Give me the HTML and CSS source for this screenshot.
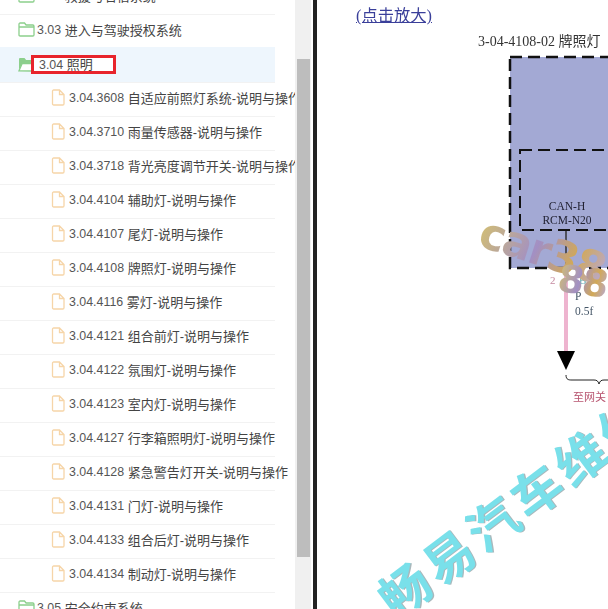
FILE: index.html
```html
<!DOCTYPE html>
<html lang="zh-CN">
  <head>
    <meta charset="UTF-8" />
    <meta name="viewport" content="width=device-width, initial-scale=1.0" />
    <title>3.04 照明</title>
    <link rel="stylesheet" href="styles.css">
  </head>

  <body>
    <svg class="icon-defs" width="0" height="0">
      <symbol id="folder" viewBox="0 0 17 15">
        <path d="M1 13V2.2C1 1.5 1.5 1 2.2 1h4.3l1.600 2h6.700c.7 0 1.200.5 1.200 1.200v8.600c0 .7-.5 1.200-1.200 1.200H2.200C1.500 14 1 13.500 1 13zM1 5h15" fill="none" stroke="#8ccf8c" stroke-width="1.3" />
      </symbol>
      <symbol id="folder-open" viewBox="0 0 17 15">
        <path d="M1 13V2.2C1 1.5 1.5 1 2.2 1h4.3l1.600 2h5.700c.7 0 1.200.5 1.200 1.200V6H4.500z" fill="#8ccf8c" />
        <path d="M1 13.8 4.200 6.500H16l-2.500 7.500z" fill="#fff" stroke="#8ccf8c" stroke-width="1.3" />
      </symbol>
      <symbol id="file" viewBox="0 0 14 17">
        <path d="M1.5 2.2C1.500 1.500 2 1 2.700 1h5.800L13 5.500v9.300c0 .7-.5 1.200-1.200 1.200H2.700c-.7 0-1.200-.5-1.200-1.200zM8.500 1v4.500H13" fill="none" stroke="#f6d5a8" stroke-width="1.3" />
      </symbol>
    </svg>

    <aside class="sidebar">
      <ul class="tree">
        <li class="row"><svg class="folder-icon"><use href="#folder" /></svg><span class="row-no">3.02</span> 救援与名宿系统</li>
        <li class="row"><svg class="folder-icon"><use href="#folder" /></svg><span class="row-no">3.03</span> 进入与驾驶授权系统</li>
        <li class="row row-active"><svg class="folder-icon"><use href="#folder-open" /></svg><span class="row-mark"><span class="row-no">3.04</span> 照明</span></li>
        <li class="row row-child"><svg class="file-icon"><use href="#file" /></svg><span class="row-no">3.04.3608</span> 自适应前照灯系统-说明与操作</li>
        <li class="row row-child"><svg class="file-icon"><use href="#file" /></svg><span class="row-no">3.04.3710</span> 雨量传感器-说明与操作</li>
        <li class="row row-child"><svg class="file-icon"><use href="#file" /></svg><span class="row-no">3.04.3718</span> 背光亮度调节开关-说明与操作</li>
        <li class="row row-child"><svg class="file-icon"><use href="#file" /></svg><span class="row-no">3.04.4104</span> 辅助灯-说明与操作</li>
        <li class="row row-child"><svg class="file-icon"><use href="#file" /></svg><span class="row-no">3.04.4107</span> 尾灯-说明与操作</li>
        <li class="row row-child"><svg class="file-icon"><use href="#file" /></svg><span class="row-no">3.04.4108</span> 牌照灯-说明与操作</li>
        <li class="row row-child"><svg class="file-icon"><use href="#file" /></svg><span class="row-no">3.04.4116</span> 雾灯-说明与操作</li>
        <li class="row row-child"><svg class="file-icon"><use href="#file" /></svg><span class="row-no">3.04.4121</span> 组合前灯-说明与操作</li>
        <li class="row row-child"><svg class="file-icon"><use href="#file" /></svg><span class="row-no">3.04.4122</span> 氛围灯-说明与操作</li>
        <li class="row row-child"><svg class="file-icon"><use href="#file" /></svg><span class="row-no">3.04.4123</span> 室内灯-说明与操作</li>
        <li class="row row-child"><svg class="file-icon"><use href="#file" /></svg><span class="row-no">3.04.4127</span> 行李箱照明灯-说明与操作</li>
        <li class="row row-child"><svg class="file-icon"><use href="#file" /></svg><span class="row-no">3.04.4128</span> 紧急警告灯开关-说明与操作</li>
        <li class="row row-child"><svg class="file-icon"><use href="#file" /></svg><span class="row-no">3.04.4131</span> 门灯-说明与操作</li>
        <li class="row row-child"><svg class="file-icon"><use href="#file" /></svg><span class="row-no">3.04.4133</span> 组合后灯-说明与操作</li>
        <li class="row row-child"><svg class="file-icon"><use href="#file" /></svg><span class="row-no">3.04.4134</span> 制动灯-说明与操作</li>
        <li class="row"><svg class="folder-icon"><use href="#folder" /></svg><span class="row-no">3.05</span> 安全约束系统</li>
      </ul>
      <div class="scrollbar"><div class="scrollbar-thumb"></div></div>
    </aside>

    <main class="content">
      <a class="zoom-link" href="#">(点击放大)</a>
      <div class="diagram">
        <svg class="wiring" width="291" height="412" viewBox="0 0 291 412">
          <text class="wiring-title" x="161" y="46">3-04-4108-02 牌照灯</text>
          <rect x="193" y="57" width="120" height="211" fill="#a3a9d4" stroke="#111" stroke-width="2.5" stroke-dasharray="12 6" />
          <rect x="203" y="150" width="120" height="80" fill="none" stroke="#111" stroke-width="2" stroke-dasharray="12 6" />
          <text class="wiring-label" x="250" y="210" text-anchor="middle">CAN-H</text>
          <text class="wiring-label" x="250" y="224" text-anchor="middle">RCM-N20</text>
          <path d="M249 231V268" stroke="#333" stroke-width="1.5" />
          <path d="M249 270V354" stroke="#eeb4cf" stroke-width="4" />
          <text class="wiring-pin" x="233" y="284">2</text>
          <text class="wiring-code" x="262" y="284">B1</text>
          <text class="wiring-wire" x="258" y="300">P</text>
          <text class="wiring-wire" x="258" y="315">0.5f</text>
          <path d="M240 351H258L249 370z" fill="#000" />
          <path d="M249 375c0 5 3 5 6 5h22c3 0 4 1 5 4 1-3 2-4 5-4h10" fill="none" stroke="#222" stroke-width="1" />
          <text class="wiring-note" x="256" y="401">至网关</text>
        </svg>
      </div>
      <span class="mark mark-car">car38</span>
      <span class="mark mark-car-end">88</span>
      <span class="mark mark-site">畅易汽车维修</span>
    </main>
  </body>
</html>
```

FILE: styles.css
```css
body {
  display: flex;
  height: 609px;
  margin: 0;
  overflow: hidden;
  background: #fff;
  font-family: "Liberation Sans", "Noto Sans CJK SC", sans-serif;
}

.icon-defs {
  position: absolute;
}

/* left tree */
.sidebar {
  display: flex;
  flex: none;
  width: 313px;
  overflow: hidden;
}

.tree {
  flex: none;
  width: 295px;
  margin: -20px 0 0;
  padding: 0;
  overflow: hidden;
  list-style: none;
  font-size: 13px;
  color: #444;
}

.row {
  display: flex;
  align-items: center;
  box-sizing: border-box;
  width: 275px;
  height: 34px;
  padding: 0 0 4px 18px;
  border-top: 1px solid #f2f2f2;
  white-space: pre;
}

.row-active {
  padding-bottom: 2px;
  border-top-color: #eef6fd;
  background: #eef6fd;
  box-shadow: 0 -1px #eef6fd;
}

.row-child {
  padding-left: 51px;
}

.row-no {
  font-size: 12.4px;
  color: #555;
}

.row-mark {
  box-sizing: border-box;
  width: 85px;
  height: 19px;
  margin-left: -6px;
  padding-left: 5px;
  border: 3px solid #e8242c;
  background: #fff;
  line-height: 13px;
}

.folder-icon {
  flex: none;
  width: 17px;
  height: 15px;
  margin-right: 2px;
}

.file-icon {
  flex: none;
  width: 14px;
  height: 17px;
  margin-right: 4px;
}

.scrollbar {
  flex: none;
  box-sizing: border-box;
  width: 16px;
  padding: 59px 1px 52px 2px;
  background: #f0f0f0;
}

.scrollbar-thumb {
  height: 100%;
  background: #bdbdbd;
}

/* right document */
.content {
  position: relative;
  flex: 1;
  min-width: 0;
  overflow: hidden;
  border-left: 4px solid #222;
  filter: blur(0.4px);
}

.zoom-link {
  display: block;
  margin: 2px 0 0 39px;
  font-family: "Liberation Serif", "Noto Sans CJK SC", serif;
  font-size: 16.3px;
  color: #3a3f9a;
}

.diagram {
  position: absolute;
  top: 0;
  left: 0;
}

.wiring-title {
  font-family: "Liberation Serif", "Noto Sans CJK SC", serif;
  font-size: 14px;
  fill: #333;
}

.wiring-label {
  font-family: "Liberation Serif", serif;
  font-size: 11.5px;
  fill: #223;
}

.wiring-pin {
  font-family: "Liberation Serif", serif;
  font-size: 11px;
  fill: #c58aa0;
}

.wiring-code {
  font-family: "Liberation Serif", serif;
  font-size: 11px;
  fill: #5aa8b0;
}

.wiring-wire {
  font-family: "Liberation Serif", serif;
  font-size: 11.5px;
  fill: #456;
}

.wiring-note {
  font-family: "Liberation Serif", "Noto Sans CJK SC", serif;
  font-size: 11px;
  fill: #b85570;
}

.mark {
  position: absolute;
  white-space: nowrap;
  font-weight: bold;
  line-height: 1;
  transform-origin: 0 50%;
}

.mark-car,
.mark-car-end {
  font-family: "DejaVu Sans", sans-serif;
  letter-spacing: -2px;
  color: transparent;
  background: linear-gradient(100deg, #d3bf72, #a28fc4 45%, #d2a956 75%, #b7a8d2);
  background-clip: text;
  -webkit-background-clip: text;
}

.mark-car {
  top: 209px;
  left: 164px;
  font-size: 44px;
  transform: rotate(18deg);
}

.mark-car-end {
  top: 259px;
  left: 241px;
  font-size: 38px;
  transform: rotate(8deg);
}

.mark-site {
  top: 578px;
  left: 66px;
  font-family: "Noto Sans CJK SC", sans-serif;
  font-size: 50px;
  letter-spacing: 5px;
  color: #79e0ea;
  text-shadow: 1px 1px #a9b8bc;
  transform: rotate(-37deg);
}
```
